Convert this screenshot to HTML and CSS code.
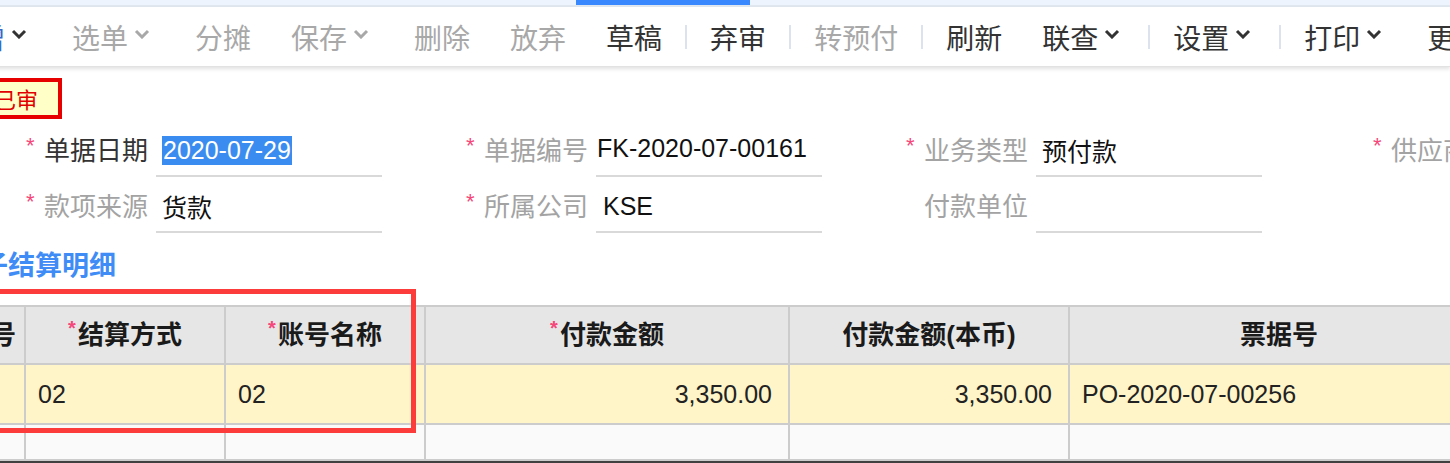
FILE: index.html
```html
<!DOCTYPE html>
<html>
 <head>
  <meta charset="utf-8">
  <title>付款单</title>
  <link rel="stylesheet" href="styles.css">
 </head>
 <body>
  <div class="strip"><div class="tab-mark"></div></div>
  <div class="toolbar">
   <span class="tb first">新增<svg class="chev" viewBox="0 0 16 10"><path d="M2 2l6 6 6-6"/></svg></span>
   <span class="tb">选单<svg class="chev" viewBox="0 0 16 10"><path d="M2 2l6 6 6-6"/></svg></span>
   <span class="tb">分摊</span>
   <span class="tb">保存<svg class="chev" viewBox="0 0 16 10"><path d="M2 2l6 6 6-6"/></svg></span>
   <span class="tb">删除</span>
   <span class="tb">放弃</span>
   <span class="tb on">草稿</span>
   <span class="sep"></span>
   <span class="tb on">弃审</span>
   <span class="sep"></span>
   <span class="tb">转预付</span>
   <span class="sep"></span>
   <span class="tb on">刷新</span>
   <span class="tb on">联查<svg class="chev" viewBox="0 0 16 10"><path d="M2 2l6 6 6-6"/></svg></span>
   <span class="sep"></span>
   <span class="tb on">设置<svg class="chev" viewBox="0 0 16 10"><path d="M2 2l6 6 6-6"/></svg></span>
   <span class="sep"></span>
   <span class="tb on">打印<svg class="chev" viewBox="0 0 16 10"><path d="M2 2l6 6 6-6"/></svg></span>
   <span class="tb on">更多</span>
  </div>

  <div class="stamp">已审</div>

  <div class="form">
   <div class="field"><i class="req">*</i><span class="lbl cur">单据日期</span><div class="val"><span class="sel">2020-07-29</span></div></div>
   <div class="field"><i class="req">*</i><span class="lbl">单据编号</span><div class="val code">FK-2020-07-00161</div></div>
   <div class="field"><i class="req">*</i><span class="lbl">业务类型</span><div class="val">预付款</div></div>
   <div class="field last"><i class="req">*</i><span class="lbl">供应商</span><div class="val"></div></div>
   <div class="field"><i class="req">*</i><span class="lbl">款项来源</span><div class="val">货款</div></div>
   <div class="field"><i class="req">*</i><span class="lbl">所属公司</span><div class="val co">KSE</div></div>
   <div class="field"><i class="req hide">*</i><span class="lbl">付款单位</span><div class="val"></div></div>
  </div>

  <div class="detail">
   <div class="title">子结算明细</div>
   <div class="grid">
    <div class="hd">行号</div>
    <div class="hd"><i class="req">*</i>结算方式</div>
    <div class="hd"><i class="req">*</i>账号名称</div>
    <div class="hd"><i class="req">*</i>付款金额</div>
    <div class="hd">付款金额(本币)</div>
    <div class="hd">票据号</div>

    <div class="row"></div>
    <div class="row">02</div>
    <div class="row">02</div>
    <div class="row num">3,350.00</div>
    <div class="row num">3,350.00</div>
    <div class="row">PO-2020-07-00256</div>

    <div class="blank"></div>
    <div class="blank"></div>
    <div class="blank"></div>
    <div class="blank"></div>
    <div class="blank"></div>
    <div class="blank"></div>
   </div>
   <div class="mark"></div>
  </div>
  <div class="foot"></div>
 </body>
</html>
```

FILE: styles.css
```css
* {box-sizing:border-box}
body {margin:0; width:1450px; height:463px; overflow:hidden; background:#fff; color:#222; font-family:"Liberation Sans","Noto Sans CJK SC",sans-serif}

.strip {height:7px; background:#eef4fd; border-bottom:2px solid #e2e8f0}
.tab-mark {margin-left:576px; width:174px; height:5px; background:#3a88fd}

.toolbar {display:flex; align-items:center; height:60px; margin-left:-71px; border-bottom:1px solid #e2e2e2; box-shadow:0 2px 4px rgba(0,0,0,.12); font:28px/1 "Noto Sans CJK SC",sans-serif; color:#a8a8a8; white-space:nowrap}
.tb {display:flex; align-items:center; padding:0 20px}
.tb.on {color:#333}
.first {color:#3469c9}
.first .chev {stroke:#333}
.chev {width:16px; height:10px; margin:0 5px 6px 6px; fill:none; stroke:currentColor; stroke-width:3}
.sep {width:2px; height:24px; margin:0 3px; background:#dde3ee; flex:none}

.stamp {width:fit-content; margin:11px 0 0 -30px; padding:0 20px; line-height:33px; border:4px solid #e60000; background:#ffffc8; color:#e00000; font:22px/33px "Noto Sans CJK SC",sans-serif}

.form {display:grid; grid-template-columns:repeat(4, 440px); margin-top:2px}
.field {display:flex; align-items:center; height:56px; padding-left:26px; white-space:nowrap}
.field.last {padding-left:53px}
.req {font-style:normal; color:#f5477a; font-size:22px; width:8px; line-height:1; position:relative; top:-3px}
.req.hide {visibility:hidden}
.lbl {width:104px; margin-left:10px; font:26px/1 "Noto Sans CJK SC",sans-serif; color:#a3a3a3}
.lbl.cur {color:#333}
.val {width:226px; height:56px; margin-left:8px; padding:4px 0 0 6px; border-bottom:2px solid #d9d9d9; display:flex; align-items:center; font-size:25px; color:#111}
.val.code {padding-left:1px; padding-bottom:4px}
.val.co {padding-left:7px}
.sel {background:#3b8cf0; color:#fff; line-height:29px; padding:0 1px}

.detail {position:relative; margin-top:11px}
.title {height:40px; margin:0 0 21px -19px; font:bold 27px/40px "Noto Sans CJK SC",sans-serif; color:#3f8cf7}

.grid {display:grid; grid-template-columns:70px 200px 200px 364px 280px 420px; margin-left:-44px; border-top:2px solid #ccc}
.grid > div {display:flex; align-items:center; padding:0 12px; border-right:2px solid #ccc; border-bottom:2px solid #ccc; font-size:25px; white-space:nowrap}
.hd {height:58px; background:#e6e6e6; justify-content:center; font-weight:bold; color:#1a1a1a}
.grid > .hd {font:bold 26px/1 "Liberation Sans","Noto Sans CJK SC",sans-serif}
.hd .req {font-size:20px; top:-7px; margin-right:2px}
.row {height:60px; background:#fff5c9}
.grid > .num {justify-content:flex-end; padding-right:16px}
.blank {height:36px; background:#fafafa}

.mark {position:absolute; left:-10px; top:45px; width:426px; height:144px; border:5px solid #fc3b3b}
.foot {height:4px; background:#404040}
```
